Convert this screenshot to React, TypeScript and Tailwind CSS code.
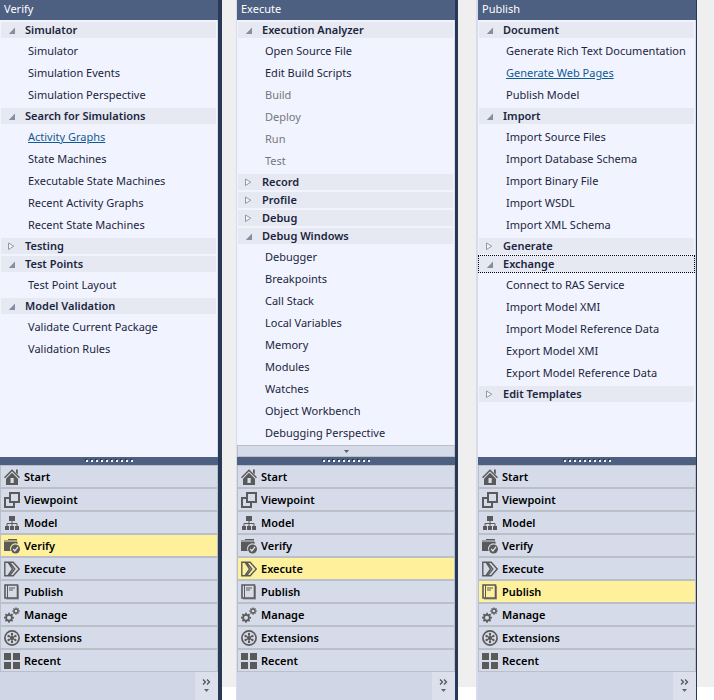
import React, { useState } from 'react';

type Item = { label: string; disabled?: boolean; linked?: boolean };
type Group = { title: string; open?: boolean; focused?: boolean; items?: Item[] };
type PanelData = { title: string; active: string; groups: Group[]; more?: boolean };

const list = (...labels: string[]): Item[] => labels.map((label) => ({ label }));

const VERIFY: PanelData = {
  title: 'Verify',
  active: 'Verify',
  groups: [
    { title: 'Simulator', open: true, items: list('Simulator', 'Simulation Events', 'Simulation Perspective') },
    {
      title: 'Search for Simulations',
      open: true,
      items: [
        { label: 'Activity Graphs', linked: true },
        ...list('State Machines', 'Executable State Machines', 'Recent Activity Graphs', 'Recent State Machines'),
      ],
    },
    { title: 'Testing' },
    { title: 'Test Points', open: true, items: list('Test Point Layout') },
    { title: 'Model Validation', open: true, items: list('Validate Current Package', 'Validation Rules') },
  ],
};

const EXECUTE: PanelData = {
  title: 'Execute',
  active: 'Execute',
  more: true,
  groups: [
    {
      title: 'Execution Analyzer',
      open: true,
      items: [
        ...list('Open Source File', 'Edit Build Scripts'),
        { label: 'Build', disabled: true },
        { label: 'Deploy', disabled: true },
        { label: 'Run', disabled: true },
        { label: 'Test', disabled: true },
      ],
    },
    { title: 'Record' },
    { title: 'Profile' },
    { title: 'Debug' },
    {
      title: 'Debug Windows',
      open: true,
      items: list(
        'Debugger',
        'Breakpoints',
        'Call Stack',
        'Local Variables',
        'Memory',
        'Modules',
        'Watches',
        'Object Workbench',
        'Debugging Perspective',
      ),
    },
  ],
};

const PUBLISH: PanelData = {
  title: 'Publish',
  active: 'Publish',
  groups: [
    {
      title: 'Document',
      open: true,
      items: [
        { label: 'Generate Rich Text Documentation' },
        { label: 'Generate Web Pages', linked: true },
        { label: 'Publish Model' },
      ],
    },
    {
      title: 'Import',
      open: true,
      items: list(
        'Import Source Files',
        'Import Database Schema',
        'Import Binary File',
        'Import WSDL',
        'Import XML Schema',
      ),
    },
    { title: 'Generate' },
    {
      title: 'Exchange',
      open: true,
      focused: true,
      items: list(
        'Connect to RAS Service',
        'Import Model XMI',
        'Import Model Reference Data',
        'Export Model XMI',
        'Export Model Reference Data',
      ),
    },
    { title: 'Edit Templates' },
  ],
};

const Gear = ({ cx, cy, r, w }: { cx: number; cy: number; r: number; w: number }) => (
  <g>
    <circle cx={cx} cy={cy} r={r} fill="none" stroke="currentColor" strokeWidth={w} />
    {[0, 45, 90, 135, 180, 225, 270, 315].map((a) => (
      <path
        key={a}
        d={`M${cx} ${cy - r - w / 4}v${-w}`}
        stroke="currentColor"
        strokeWidth={w}
        transform={`rotate(${a} ${cx} ${cy})`}
      />
    ))}
  </g>
);

const NAV: { label: string; icon: React.ReactNode }[] = [
  {
    label: 'Start',
    icon: (
      <>
        <path d="M0.5 8.8 8 1.2l7.5 7.6" fill="none" stroke="currentColor" strokeWidth="1.5" />
        <path d="M12 0.5h1.8v5L12 3.7z" fill="currentColor" />
        <path d="M8 3.8 14 9.8V16H2V9.8z" fill="currentColor" />
        <path d="M6.5 9h3.2v5H6.5z" fill="#d6dbe9" />
      </>
    ),
  },
  {
    label: 'Viewpoint',
    icon: (
      <>
        <path d="M5 6H1v9h9v-4" fill="none" stroke="currentColor" strokeWidth="2" />
        <path d="M6 1h9v9H6z" fill="none" stroke="currentColor" strokeWidth="2" />
      </>
    ),
  },
  {
    label: 'Model',
    icon: (
      <>
        <path d="M5 1h6v5H5zM1 11h4v4H1zM6 11h4v4H6zM11 11h4v4h-4z" fill="currentColor" />
        <path d="M8 6v5M3 11V8.500h10V11" fill="none" stroke="currentColor" strokeWidth="1" />
      </>
    ),
  },
  {
    label: 'Verify',
    icon: (
      <>
        <path d="M0 2h4V1h9v1.500H0z" fill="currentColor" />
        <path d="M0 3.500h13.500v2.400a5.200 5.200 0 0 0-6.800 7.100H0z" fill="currentColor" />
        <circle cx="11.500" cy="11" r="4.500" fill="currentColor" />
        <path d="m9.200 11 1.700 1.900 3.100-4" fill="none" stroke="#e4e4dc" strokeWidth="1.300" />
      </>
    ),
  },
  {
    label: 'Execute',
    icon: (
      <path
        d="M.8 1.200h3.200L8.600 8l-4.800 6.800H.8zM5.500 1.200h3.700L15.200 8l-6 6.800H5.500L10.800 8zM9 1.200"
        fill="none"
        stroke="currentColor"
        strokeWidth="1.400"
      />
    ),
  },
  {
    label: 'Publish',
    icon: (
      <>
        <path d="M13.500 2H15v13.500H2V14h11.500z" fill="#909399" />
        <path d="M1 1h12.500v13H1z" fill="none" stroke="currentColor" strokeWidth="1.600" />
        <path d="M3.500 1v13" stroke="currentColor" strokeWidth="1" />
        <path d="M5 4h6M5 6h4" stroke="currentColor" strokeWidth="1" />
      </>
    ),
  },
  {
    label: 'Manage',
    icon: (
      <>
        <Gear cx={5} cy={10.7} r={2.9} w={1.7} />
        <Gear cx={12} cy={4} r={2} w={1.3} />
      </>
    ),
  },
  {
    label: 'Extensions',
    icon: (
      <>
        <circle cx="8" cy="8" r="7.1" fill="none" stroke="currentColor" strokeWidth="1.7" />
        <circle cx="8" cy="8" r="2" fill="currentColor" />
        {[0, 60, 120, 180, 240, 300].map((a) => (
          <g key={a} transform={`rotate(${a} 8 8)`}>
            <path d="M8 8V4" stroke="currentColor" strokeWidth="1.2" />
            <circle cx="8" cy="4" r="1.2" fill="currentColor" />
          </g>
        ))}
      </>
    ),
  },
  {
    label: 'Recent',
    icon: <path d="M0 0h7v7H0zM9 0h7v7H9zM0 9h7v7H0zM9 9h7v7H9z" fill="currentColor" />,
  },
];

const Arrow = ({ open }: { open?: boolean }) => (
  <svg width="8" height="8" viewBox="0 0 8 8" className="shrink-0" aria-hidden="true">
    {open ? (
      <path d="M7 1.500V8H.8z" fill="#858ea2" />
    ) : (
      <path d="M.5 1v6.500L5.800 4.200z" fill="#f4f6fc" stroke="#8f98aa" />
    )}
  </svg>
);

const ToolGroup = ({ group }: { group: Group }) => {
  const [open, setOpen] = useState(!!group.open);

  return (
    <section className="flex flex-col gap-[2px]">
      <button
        type="button"
        aria-expanded={open}
        onClick={() => setOpen(!open)}
        className={`flex h-4 w-full items-center gap-[9px] bg-[#e6e9f1] pl-[7px] text-left font-semibold text-[#1b2540] ${
          group.focused ? 'outline-1 outline-dotted outline-black' : ''
        }`}
      >
        <Arrow open={open} />
        <span>{group.title}</span>
      </button>
      {open && group.items && (
        <ul>
          {group.items.map((item) => (
            <li key={item.label} className="flex h-[22px] items-center pl-[27px]">
              <a
                href="#"
                aria-disabled={item.disabled}
                className={
                  item.disabled ? 'text-[#75777c]' : item.linked ? 'text-[#0f5a94] underline' : 'text-[#1b2540]'
                }
              >
                {item.label}
              </a>
            </li>
          ))}
        </ul>
      )}
    </section>
  );
};

const Panel = ({ data, edges }: { data: PanelData; edges: string }) => {
  const [active, setActive] = useState(data.active);

  return (
    <div className={`flex min-w-0 flex-col bg-[#d0d6e6] ${edges}`}>
      <h2 className="h-5 shrink-0 bg-[#4d6082] pl-1 leading-[18px] text-white">{data.title}</h2>
      <div className="flex flex-1 flex-col gap-[2px] border-r border-[#d6dcec] bg-[#f1f4fe] px-px pt-[2px] whitespace-nowrap">
        {data.groups.map((group) => (
          <ToolGroup key={group.title} group={group} />
        ))}
      </div>
      {data.more && (
        <button
          type="button"
          aria-label="Scroll down"
          className="flex h-3 shrink-0 items-center justify-center border border-[#bbbfc8] bg-[#d6dbe9]"
        >
          <svg width="5" height="3" viewBox="0 0 5 3" aria-hidden="true">
            <path d="M0 0h5L2.5 3z" fill="#5c5f66" />
          </svg>
        </button>
      )}
      <div className="flex h-2 shrink-0 items-center justify-center bg-[#4d6082]">
        <svg width="49" height="4" viewBox="0 0 49 4" aria-hidden="true">
          {Array.from({ length: 10 }, (_, i) => (
            <g key={i}>
              <path d={`M${i * 5} 0h2v2h-2z`} fill="#2c3548" />
              <path d={`M${i * 5 + 1} 1h2v2h-2z`} fill="#f4f4f4" />
            </g>
          ))}
        </svg>
      </div>
      <nav>
        {NAV.map(({ label, icon }) => (
          <button
            key={label}
            type="button"
            onClick={() => setActive(label)}
            className={`flex h-[23px] w-full items-center gap-1 border border-[#bbbfc8] pl-[3px] text-left font-semibold text-black ${
              active === label ? 'bg-[#fff09c]' : 'bg-[#d6dbe9]'
            }`}
          >
            <svg width="16" height="16" viewBox="0 0 16 16" className="shrink-0 text-[#5a5a5a]" aria-hidden="true">
              {icon}
            </svg>
            <span>{label}</span>
          </button>
        ))}
      </nav>
      <div className="flex h-7 shrink-0 justify-end">
        <button
          type="button"
          aria-label="Configure buttons"
          className="flex w-[23px] flex-col items-center bg-[#dce0ed] pt-[7px]"
        >
          <svg width="9" height="13" viewBox="0 0 9 13" aria-hidden="true">
            <path d="m1 .5 2.500 2.500L1 5.500M5 .5 7.500 3 5 5.500" fill="none" stroke="#555" strokeWidth="1.300" />
            <path d="M2 10h5l-2.500 3z" fill="#666" />
          </svg>
        </button>
      </div>
    </div>
  );
};

const Gutter = () => <div className="mb-[13px] bg-[#efefef]" />;

const App: React.FC = () => {
  return (
    <main className="grid min-h-screen grid-cols-[222fr_14px_222fr_18px_221fr_17px] bg-white font-['Noto_Sans','Open_Sans',sans-serif] text-[11px] leading-4">
      <Panel data={VERIFY} edges="border-r-4 border-[#293955]" />
      <Gutter />
      <Panel data={EXECUTE} edges="border-l border-r-3 border-l-[#d6dcec] border-r-[#293955]" />
      <Gutter />
      <Panel data={PUBLISH} edges="border-l-2 border-r border-l-[#d6dcec] border-r-[#293955]" />
      <Gutter />
    </main>
  );
};

export default App;
